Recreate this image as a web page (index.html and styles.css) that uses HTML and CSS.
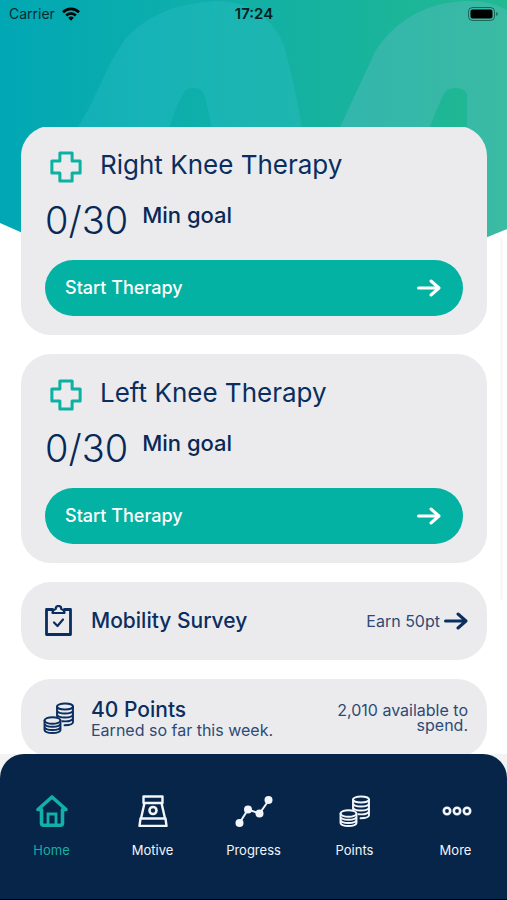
FILE: index.html
```html
<!DOCTYPE html>
<html lang="en">
<head>
<meta charset="utf-8">
<meta name="viewport" content="width=device-width, initial-scale=1">
<title>Home</title>
<link rel="stylesheet" href="styles.css">
</head>
<body>
<svg class="symbols" aria-hidden="true">
  <symbol id="cross" viewBox="0 0 34 34"><path d="M10.500 2h13v8.500H32v13h-8.500V32h-13v-8.500H2v-13h8.500z" fill="none" stroke="currentColor" stroke-width="3.200" stroke-linejoin="round"/></symbol>
  <symbol id="arrow" viewBox="0 0 24 18"><path d="M1.500 9h20M14 2l8 7-8 7" fill="none" stroke="currentColor" stroke-width="3" stroke-linecap="round" stroke-linejoin="round"/></symbol>
  <symbol id="coins" viewBox="0 0 32 32">
    <g fill="none" stroke="currentColor" stroke-width="1.900" stroke-linecap="round">
      <ellipse cx="22" cy="4.500" rx="8" ry="3"/>
      <path d="M14 4.500v9.500M30 4.500v15.500c0 2-3.500 3.200-8.500 3.200M14 8.500c1 4 15 4 16 0M14 12.500c1 4 15 4 16 0M19.500 19.300c4.500.3 9.500-.3 10.500-3"/>
      <ellipse cx="9.500" cy="18.500" rx="8" ry="3.200"/>
      <path d="M1.500 18.500V28c1 4 15 4 16 0v-9.500M1.500 21.700c1 4 15 4 16 0M1.500 25c1 4 15 4 16 0"/>
    </g>
  </symbol>
</svg>
<div class="app">
  <svg class="banner" viewBox="0 0 507 238" preserveAspectRatio="none" aria-hidden="true">
    <defs>
      <linearGradient id="sea" x1="0" y1="0" x2="1" y2="0">
        <stop offset="0" stop-color="#00a7b4"/>
        <stop offset=".4" stop-color="#0fafaa"/>
        <stop offset=".7" stop-color="#18b39c"/>
        <stop offset="1" stop-color="#22b991"/>
      </linearGradient>
      <clipPath id="edge"><path d="M0 0h507v229l-22 9H34L0 223z"/></clipPath>
    </defs>
    <g clip-path="url(#edge)">
      <path d="M0 0h507v238H0z" fill="url(#sea)"/>
      <path d="M30 238L78 127C100 92 105 66 126 38C151 12 180 3 216 1C248 1 271 16 284 45C293 80 297 98 302 127V238H211V127C209 112 206 100 203 92C198 87 190 87 185 91C178 103 174 112 170 127V238z" fill="#35c3cf" fill-opacity=".28"/>
      <path d="M290 238L340 127L375 52C395 19 429 2 465 1Q490 0 507 10V238H467V94C463 86 449 87 445 92C439 103 435 114 430 127V238z" fill="#7fc2d8" fill-opacity=".27"/>
    </g>
  </svg>

  <header class="status">
    <span class="status-carrier">Carrier
      <svg width="18" height="14" viewBox="0 0 18 14" aria-hidden="true"><g fill="none" stroke="#000" stroke-width="2.600"><path d="M1 5.200C5.500.800 12.500.800 17 5.200"/><path d="M4.200 8.500c2.700-2.700 6.900-2.700 9.600 0"/></g><path d="M6.200 10.700c1.600-1.500 4-1.500 5.600 0L9 13.700z"/></svg>
    </span>
    <time class="status-time">17:24</time>
    <svg class="status-battery" width="31" height="14" viewBox="0 0 31 14" role="img" aria-label="Battery full"><rect x=".5" y=".5" width="26" height="13" rx="4" fill="none" stroke="#000" stroke-opacity=".45"/><rect x="2.500" y="2.500" width="22" height="9" rx="2"/><path d="M28.300 5v4c2-.7 2-3.300 0-4z" fill-opacity=".5"/></svg>
  </header>

  <main class="feed">
    <div class="cards">
      <section class="card therapy">
        <h2 class="therapy-title"><svg class="icon-cross"><use href="#cross"/></svg>Right Knee Therapy</h2>
        <p class="goal"><span class="goal-count">0/30</span><span class="goal-label">Min goal</span></p>
        <button class="start" type="button">Start Therapy<svg class="icon-arrow"><use href="#arrow"/></svg></button>
      </section>

      <section class="card therapy">
        <h2 class="therapy-title"><svg class="icon-cross"><use href="#cross"/></svg>Left Knee Therapy</h2>
        <p class="goal"><span class="goal-count">0/30</span><span class="goal-label">Min goal</span></p>
        <button class="start" type="button">Start Therapy<svg class="icon-arrow"><use href="#arrow"/></svg></button>
      </section>

      <a class="card row" href="#survey">
        <svg class="row-icon" viewBox="0 0 32 32" aria-hidden="true"><g fill="none" stroke="currentColor" stroke-width="2.800" stroke-linejoin="round" stroke-linecap="round"><path d="M9.500 4.500H3.500v25h24v-25H21.500"/><path d="M9.500 8c0-3 1.500-3.500 3.200-4 0-4 5.600-4 5.600 0C20 4.500 21.500 5 21.500 8z" stroke-width="2.200"/><path d="M11 17.500l3.500 3.500 5.500-6.500" stroke-width="2.200"/></g></svg>
        <span class="row-title">Mobility Survey</span>
        <span class="row-side row-link">Earn 50pt<svg class="icon-arrow"><use href="#arrow"/></svg></span>
      </a>

      <section class="card row">
        <svg class="row-icon" aria-hidden="true"><use href="#coins"/></svg>
        <div class="row-text">
          <h2 class="row-title">40 Points</h2>
          <p class="row-note">Earned so far this week.</p>
        </div>
        <p class="row-side">2,010 available to spend.</p>
      </section>
    </div>
  </main>
  <div class="scroll-thumb"></div>

  <div class="dock">
  <nav class="tabs" aria-label="Main">
    <a class="tab tab-active" href="#home" aria-current="page">
      <svg class="tab-icon" viewBox="0 0 32 32" aria-hidden="true"><g fill="none" stroke="currentColor" stroke-width="3.600" stroke-linejoin="round" stroke-linecap="round"><path d="M2 14.500h3.500V28q0 2.200 2.200 2.200h16.600q2.200 0 2.200-2.200V14.500H30L16 2z"/><path d="M12 29.500V19h8v10.500" stroke-width="2.800" stroke-linejoin="miter"/></g></svg>
      Home
    </a>
    <a class="tab" href="#motive">
      <svg class="tab-icon" viewBox="0 0 32 32" aria-hidden="true"><g fill="none" stroke="currentColor" stroke-width="2.400" stroke-linejoin="round"><path d="M6.500 1.500h19v6.500h-19zM7.500 8L4 23.500M24.500 8L28 23.500M3.500 23.500h25l1 7.500h-27z"/><circle cx="16" cy="15.500" r="3.500" stroke-width="2.600"/></g></svg>
      Motive
    </a>
    <a class="tab" href="#progress">
      <svg class="tab-icon tab-icon-wide" viewBox="0 0 38 32" aria-hidden="true"><path d="M4.500 28L13 14.500l11.500 4L34 5" fill="none" stroke="currentColor" stroke-width="2"/><g fill="currentColor"><circle cx="4.500" cy="28" r="4"/><circle cx="13" cy="14.500" r="4"/><circle cx="24.500" cy="18.500" r="4"/><circle cx="33.500" cy="5" r="4"/></g></svg>
      Progress
    </a>
    <a class="tab" href="#points">
      <svg class="tab-icon" aria-hidden="true"><use href="#coins"/></svg>
      Points
    </a>
    <a class="tab" href="#more">
      <svg class="tab-icon" viewBox="0 0 32 32" aria-hidden="true"><g fill="none" stroke="currentColor" stroke-width="2.600"><circle cx="7" cy="16" r="3.200"/><circle cx="17" cy="16" r="3.200"/><circle cx="27" cy="16" r="3.200"/></g></svg>
      More
    </a>
  </nav>
  </div>
</div>
</body>
</html>
```
FILE: styles.css
```css
* { box-sizing: border-box; }

body {
  margin: 0;
  font-family: Inter, "Liberation Sans", sans-serif;
  color: #0a2e60;
  background: #fff;
}

h2, p { margin: 0; font-weight: 400; }
a { color: inherit; text-decoration: none; }
.symbols { display: none; }
svg { flex: none; }

.app {
  position: relative;
  display: flex;
  flex-direction: column;
  height: 100vh;
}

.banner {
  position: absolute;
  top: 0;
  left: 0;
  width: 100%;
  height: 238px;
}

.status {
  position: relative;
  display: grid;
  grid-template-columns: 1fr auto 1fr;
  align-items: center;
  flex: none;
  height: 27px;
  margin-bottom: 100px;
  padding: 0 8px 0 9px;
  font-size: 14px;
  color: #062b30;
}
.status-carrier { display: flex; align-items: center; gap: 7px; }
.status-time { font-weight: 600; font-size: 15px; color: #02201c; }
.status-battery { justify-self: end; }

.feed {
  position: relative;
  flex: 1;
  min-height: 0;
  overflow-y: auto;
  scrollbar-width: none;
}
.cards {
  display: flex;
  flex-direction: column;
  gap: 19px;
  margin: -1px 20px 0 21px;
}
.card {
  flex: none;
  border-radius: 30px;
  background: #ebebed;
}

.therapy { padding: 23px 24px 19px; }
.therapy-title {
  display: flex;
  align-items: flex-end;
  gap: 18px;
  height: 34px;
  padding-left: 5px;
  font-size: 26px;
  line-height: 36px;
}
.icon-cross { width: 32px; height: 32px; color: #0bb1a2; }
.goal {
  display: flex;
  gap: 14px;
  height: 77px;
  padding-top: 14px;
  color: #082857;
}
.goal-count { font-size: 38px; font-weight: 300; line-height: 46px; }
.goal-label { font-size: 22px; font-weight: 500; line-height: 36px; }
.start {
  display: flex;
  align-items: center;
  justify-content: space-between;
  width: 100%;
  height: 56px;
  padding: 0 22px 0 20px;
  border: 0;
  border-radius: 28px;
  background: #03b2a3;
  color: #fff;
  font: 500 18px/24px Inter, "Liberation Sans", sans-serif;
}
.icon-arrow { width: 24px; height: 18px; }

.row {
  display: flex;
  align-items: center;
  min-height: 78px;
  padding: 0 19px 0 22px;
}
.row-icon { width: 32px; height: 32px; margin-right: 16px; }
.row-title { font-size: 21px; font-weight: 500; line-height: 24px; }
.row-note { font-size: 16px; line-height: 16px; color: #2d4a76; }
.row-side {
  max-width: 140px;
  margin-left: auto;
  font-size: 16px;
  line-height: 15px;
  text-align: right;
  color: #2d4a76;
}
.row-link { display: flex; align-items: center; gap: 4px; }
.row-link .icon-arrow { color: #0a2e60; }

.scroll-thumb {
  position: absolute;
  top: 238px;
  right: 4px;
  width: 3px;
  height: 362px;
  background: #f8f8f8;
}

.dock {
  position: relative;
  flex: none;
  background: #f3f3f3;
}
.tabs {
  display: grid;
  grid-template-columns: repeat(5, 1fr);
  padding: 41px 1px;
  border-bottom: 1px solid #000;
  border-radius: 24px 24px 0 0;
  background: #062549;
}
.tab {
  display: flex;
  flex-direction: column;
  align-items: center;
  gap: 15px;
  font-size: 13px;
  line-height: 16px;
  color: #f2f5f9;
}
.tab-active { color: #12b0a5; }
.tab-icon { width: 32px; height: 32px; }
.tab-icon-wide { width: 38px; }
```
